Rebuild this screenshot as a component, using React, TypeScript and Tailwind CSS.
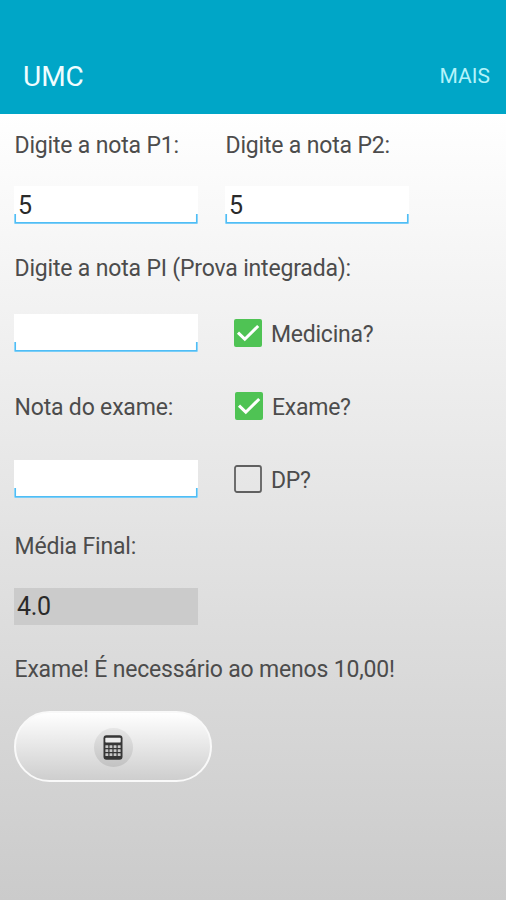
import type { ReactNode } from "react";

const LABEL = "block whitespace-nowrap pl-[0.5px] text-[23px] leading-[30px] tracking-[-0.18px] text-[#4c4c4c]";

function Field({ value = "" }: { value?: string }) {
  return (
    <div className="relative h-[38px] w-[184px] bg-white">
      <span className="block pt-px pl-[4px] text-[25px] leading-[38px] text-[#2a2a2a]">{value}</span>
      <svg className="absolute inset-0" width="184" height="38" viewBox="0 0 184 38" fill="none">
        <path d="M1.2 28v8.8h181.6V28" stroke="#4fbdf5" strokeWidth="1.7" />
      </svg>
    </div>
  );
}

function Check({ checked, children }: { checked: boolean; children: ReactNode }) {
  return (
    <div className="flex h-[38px] items-center">
      <svg width="28" height="28" viewBox="0 0 28 28" fill="none">
        {checked ? (
          <>
            <rect width="28" height="28" rx="2" fill="#4fc354" />
            <path d="M4 13.6 10.8 20.2 24.2 7" stroke="#fff" strokeWidth="3" />
          </>
        ) : (
          <rect x="1" y="1" width="26" height="26" rx="2" stroke="#606060" strokeWidth="1.8" />
        )}
      </svg>
      <span className="ml-[9px] whitespace-nowrap pt-[3px] text-[23px] leading-[30px] tracking-[-0.25px] text-[#4c4c4c]">
        {children}
      </span>
    </div>
  );
}

function Calculator() {
  const rows = [10.2, 14.2, 18.2];
  const cols = [2.4, 6.5, 10.6, 14.7];
  return (
    <svg width="20" height="25" viewBox="0 0 20 25">
      <rect x="0.5" y="0.2" width="19" height="24.6" rx="3" fill="#363636" />
      <rect x="2.3" y="2.7" width="15.4" height="4.8" rx="0.7" fill="#ededed" />
      {rows.map((y) =>
        cols.map((x) => <rect key={`${x}-${y}`} x={x} y={y} width="2.9" height="2.8" rx="0.3" fill="#c8c8c8" />),
      )}
    </svg>
  );
}

export default function App() {
  return (
    <div className="flex h-[900px] w-[506px] flex-col overflow-hidden bg-[#cbcbcb] font-['Roboto',sans-serif]">
      <header className="flex h-[114px] shrink-0 items-end justify-between bg-[#00a6c7] pr-[16px] pb-[17px] pl-[23px]">
        <h1 className="text-[28px] leading-[40px] text-[#f0fdff]">UMC</h1>
        <button className="pb-px text-[21px] leading-[40px] text-[#b4f3fa]">MAIS</button>
      </header>
      <main className="flex flex-1 flex-col bg-linear-to-b from-[#ffffff] to-[#cbcbcb] pt-[17px] pl-[14px]">
        <div className="grid grid-cols-[211px_211px]">
          <span className={LABEL}>Digite a nota P1:</span>
          <span className={LABEL}>Digite a nota P2:</span>
        </div>
        <div className="mt-[25px] grid grid-cols-[211px_211px]">
          <Field value="5" />
          <Field value="5" />
        </div>
        <span className={`mt-[30px] ${LABEL}`}>Digite a nota PI (Prova integrada):</span>
        <div className="mt-[30px] grid grid-cols-[220px_1fr]">
          <Field />
          <Check checked>Medicina?</Check>
        </div>
        <div className="mt-[35px] grid grid-cols-[221px_1fr] items-center">
          <span className={`pt-[3px] ${LABEL}`}>Nota do exame:</span>
          <Check checked>Exame?</Check>
        </div>
        <div className="mt-[35px] grid grid-cols-[220px_1fr]">
          <Field />
          <Check checked={false}>DP?</Check>
        </div>
        <span className={`mt-[34px] ${LABEL}`}>Média Final:</span>
        <div className="mt-[26px] h-[37px] w-[184px] bg-[#cbcbcb] pl-[3px] text-[25px] leading-[37px] tracking-[-0.3px] text-[#2a2a2a]">4.0</div>
        <span className={`mt-[30px] ${LABEL}`}>Exame! É necessário ao menos 10,00!</span>
        <button className="mt-[26px] flex h-[71px] w-[198px] items-center justify-center rounded-full border-2 border-[#f9f9f9] bg-linear-to-b from-[#ffffff] to-[#cecece]">
          <span className="mt-px flex size-[39px] items-center justify-center rounded-full bg-linear-to-b from-[#e6e6e6] to-[#c2c2c2]">
            <Calculator />
          </span>
        </button>
      </main>
    </div>
  );
}
